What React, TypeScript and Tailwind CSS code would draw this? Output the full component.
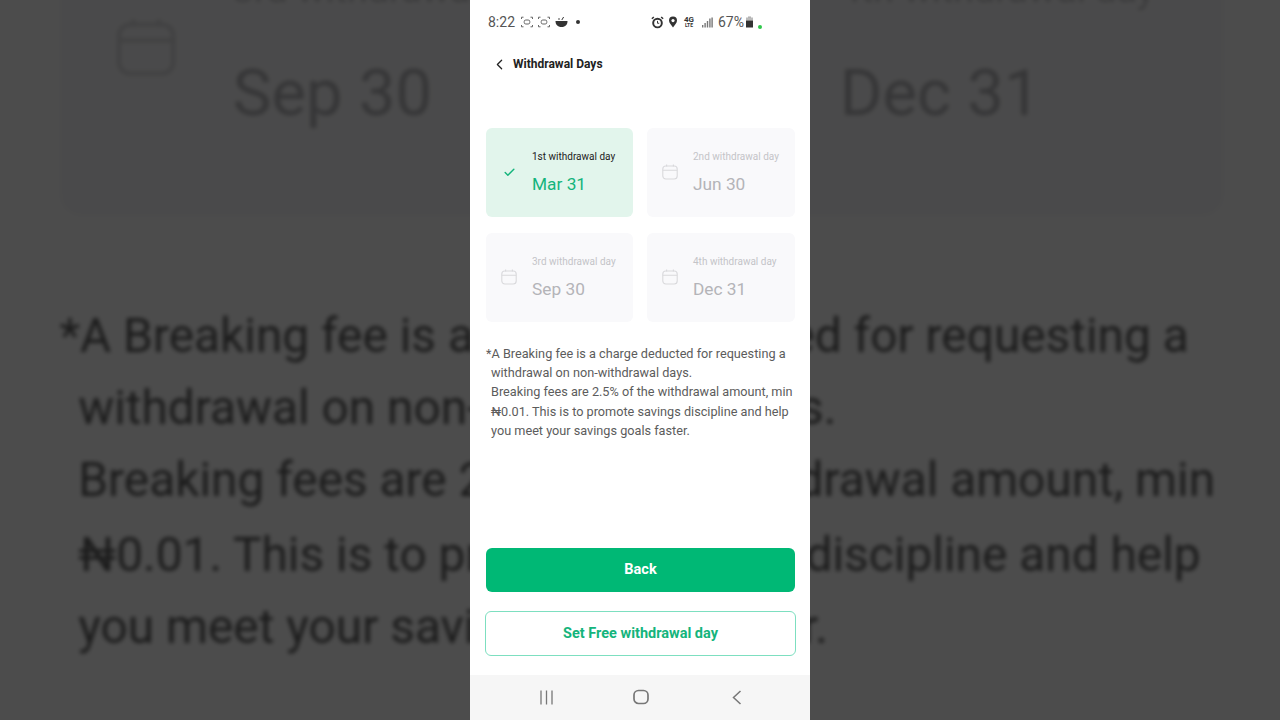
import React from "react";
import {Check, ChevronLeft} from "lucide-react";

const days = [
    {label: "1st withdrawal day", date: "Mar 31", active: true},
    {label: "2nd withdrawal day", date: "Jun 30", active: false},
    {label: "3rd withdrawal day", date: "Sep 30", active: false},
    {label: "4th withdrawal day", date: "Dec 31", active: false},
];

function CalendarIcon() {
    return (
        <svg width="16" height="16" viewBox="0 0 16 16" fill="none" stroke="#d9d9dc" strokeWidth="1.1">
            <rect x="0.8" y="2" width="14.4" height="13" rx="3"/>
            <path d="M0.8 6.2H15.2M4.6 0.6V2.6M11.4 0.6V2.6"/>
        </svg>
    );
}

function ScanIcon() {
    return (
        <svg width="12" height="12" viewBox="0 0 12 12" fill="none" stroke="#666" strokeWidth="1">
            <path d="M0.5 3V1.2H2.5M9.5 1.2H11.5V3M11.5 9V10.8H9.5M2.5 10.8H0.5V9"/>
            <rect x="3.2" y="4" width="5.6" height="4" rx="1.6"/>
        </svg>
    );
}

function StatusBar() {
    return (
        <div className="h-[44px] flex items-center pl-[18px] pr-[56px] text-[#555] text-[14px] leading-none">
            <span className="mr-[6px]">8:22</span>
            <span className="mr-[5px] flex"><ScanIcon/></span>
            <span className="mr-[5px] flex"><ScanIcon/></span>
            <svg width="13" height="12" viewBox="0 0 13 12" fill="#333" className="mr-[8px]">
                <path d="M0.5 5H12.5C12.5 8.5 10.5 11 6.5 11S0.5 8.5 0.5 5Z"/>
                <path d="M6.8 4L8.6 1" stroke="#333" strokeWidth="1"/>
                <circle cx="4" cy="3" r="0.8"/>
            </svg>
            <span className="w-[4px] h-[4px] rounded-full bg-[#333]"/>
            <div className="ml-auto flex items-center">
                <svg width="13" height="13" viewBox="0 0 12 12" fill="none" stroke="#333" className="mr-[4px]">
                    <circle cx="6" cy="6.5" r="4" strokeWidth="1.8"/>
                    <path d="M6 4.5V6.7H7.6" strokeWidth="0.9"/>
                    <path d="M0.8 2.6L2.6 0.9M11.2 2.6L9.4 0.9" strokeWidth="1.4"/>
                </svg>
                <svg width="10" height="12" viewBox="0 0 10 12" fill="none" className="mr-[5px]">
                    <path d="M5 11.5C3 8.8 1 6.8 1 4.6A4 4 0 0 1 9 4.6C9 6.8 7 8.8 5 11.5Z" fill="#333"/>
                    <circle cx="5" cy="4.6" r="1.6" fill="#fff"/>
                </svg>
                <div className="w-[12px] mr-[7px] flex flex-col items-center font-bold text-[#333]">
                    <span className="text-[8px] leading-[7px]">4G</span>
                    <span className="text-[5px] leading-[5px]">LTE</span>
                </div>
                <svg width="11" height="11" viewBox="0 0 11 11" fill="#777" className="mr-[5px]">
                    <rect x="0" y="8" width="1.4" height="2.5"/>
                    <rect x="2.4" y="6" width="1.4" height="4.5"/>
                    <rect x="4.8" y="4" width="1.4" height="6.5"/>
                    <rect x="7.2" y="1.5" width="1.4" height="9"/>
                    <rect x="9.4" y="0.5" width="1.4" height="10"/>
                </svg>
                <span>67%</span>
                <svg width="9" height="12" viewBox="0 0 9 12" className="ml-[1px]">
                    <rect x="3" y="0.5" width="3" height="1.5" fill="#aaa"/>
                    <rect x="1" y="1.5" width="7" height="3" fill="#bbb"/>
                    <rect x="1" y="4.5" width="7" height="7" fill="#333"/>
                </svg>
            </div>
            <span className="absolute left-[288px] top-[25px] w-[4px] h-[4px] rounded-full bg-[#2fc84a]"/>
        </div>
    );
}

function DayCard({label, date, active}: {label: string, date: string, active: boolean}) {
    return (
        <div className={`h-[89px] rounded-[6px] flex items-center ${active ? "bg-[#e2f5ec]" : "bg-[#f9f9fb]"}`}>
            <div className="w-[46px] flex justify-center pb-[1px]">
                {active ? <Check size={13} strokeWidth={2.6} className="text-[#14b47c]"/> : <CalendarIcon/>}
            </div>
            <div className="flex flex-col pt-[2px]">
                <span className={`text-[10px] leading-[12px] ${active ? "text-[#222]" : "text-[#c4c4c8]"}`}>{label}</span>
                <span className={`mt-[9px] text-[17.3px] leading-[24px] ${active ? "text-[#14b47c]" : "text-[#b4b4b8]"}`}>{date}</span>
            </div>
        </div>
    );
}

function Phone() {
    return (
        <div className="relative w-[340px] h-[720px] bg-white flex flex-col font-['Roboto','Noto_Sans',sans-serif]">
            <StatusBar/>
            <div className="h-[40px] flex items-center pl-[21px]">
                <ChevronLeft size={17} strokeWidth={1.8} className="text-[#222]"/>
                <span className="ml-[5px] text-[12px] font-bold text-[#222]">Withdrawal Days</span>
            </div>
            <div className="mt-[44px] ml-[16px] grid grid-cols-[147px_148px] gap-x-[14px] gap-y-[16px]">
                {days.map((day) => <DayCard key={day.label} {...day}/>)}
            </div>
            <div className="mt-[22px] ml-[16px] mr-[15px] text-[12.7px] leading-[19.2px] text-[#5c5c5c]">
                <p className="pl-[5px] -indent-[5px]">*A Breaking fee is a charge deducted for requesting a withdrawal on non-withdrawal days.</p>
                <p className="pl-[5px]">Breaking fees are 2.5% of the withdrawal amount, min ₦0.01. This is to promote savings discipline and help you meet your savings goals faster.</p>
            </div>
            <div className="mt-auto pl-[15px] pr-[14px] flex flex-col gap-[19px] pb-[19px]">
                <button className="h-[44px] mx-[1px] rounded-[6px] bg-[#00b875] text-white text-[14.5px] font-bold">Back</button>
                <button className="h-[45px] rounded-[6px] border border-[#7ddfc0] bg-white text-[#14b47c] text-[14.5px] font-bold">Set Free withdrawal day</button>
            </div>
            <div className="h-[45px] bg-[#f6f6f6] flex items-center justify-center gap-[79.5px] pl-[2px] pb-[1px]">
                <svg width="15" height="15" viewBox="0 0 15 15" stroke="#777" strokeWidth="1.3"><path d="M2 0.5V14.5M7.5 0.5V14.5M13 0.5V14.5"/></svg>
                <svg width="16" height="16" viewBox="0 0 16 16" fill="none" stroke="#777" strokeWidth="1.7"><rect x="1" y="1.5" width="14" height="13" rx="4.5"/></svg>
                <svg width="15" height="15" viewBox="0 0 15 15" fill="none" stroke="#777" strokeWidth="1.5"><path d="M11.5 1L4.5 7.5L11.5 14"/></svg>
            </div>
        </div>
    );
}

export default function App() {
    return (
        <div className="relative w-[1280px] h-[720px] overflow-hidden bg-white flex justify-center">
            {/* same screen blown up and blurred behind the phone */}
            <div aria-hidden className="absolute inset-0 flex justify-center scale-[3.77] blur-[0.6px]">
                <Phone/>
            </div>
            <div className="absolute inset-0 bg-black/70"/>
            <Phone/>
        </div>
    );
}
